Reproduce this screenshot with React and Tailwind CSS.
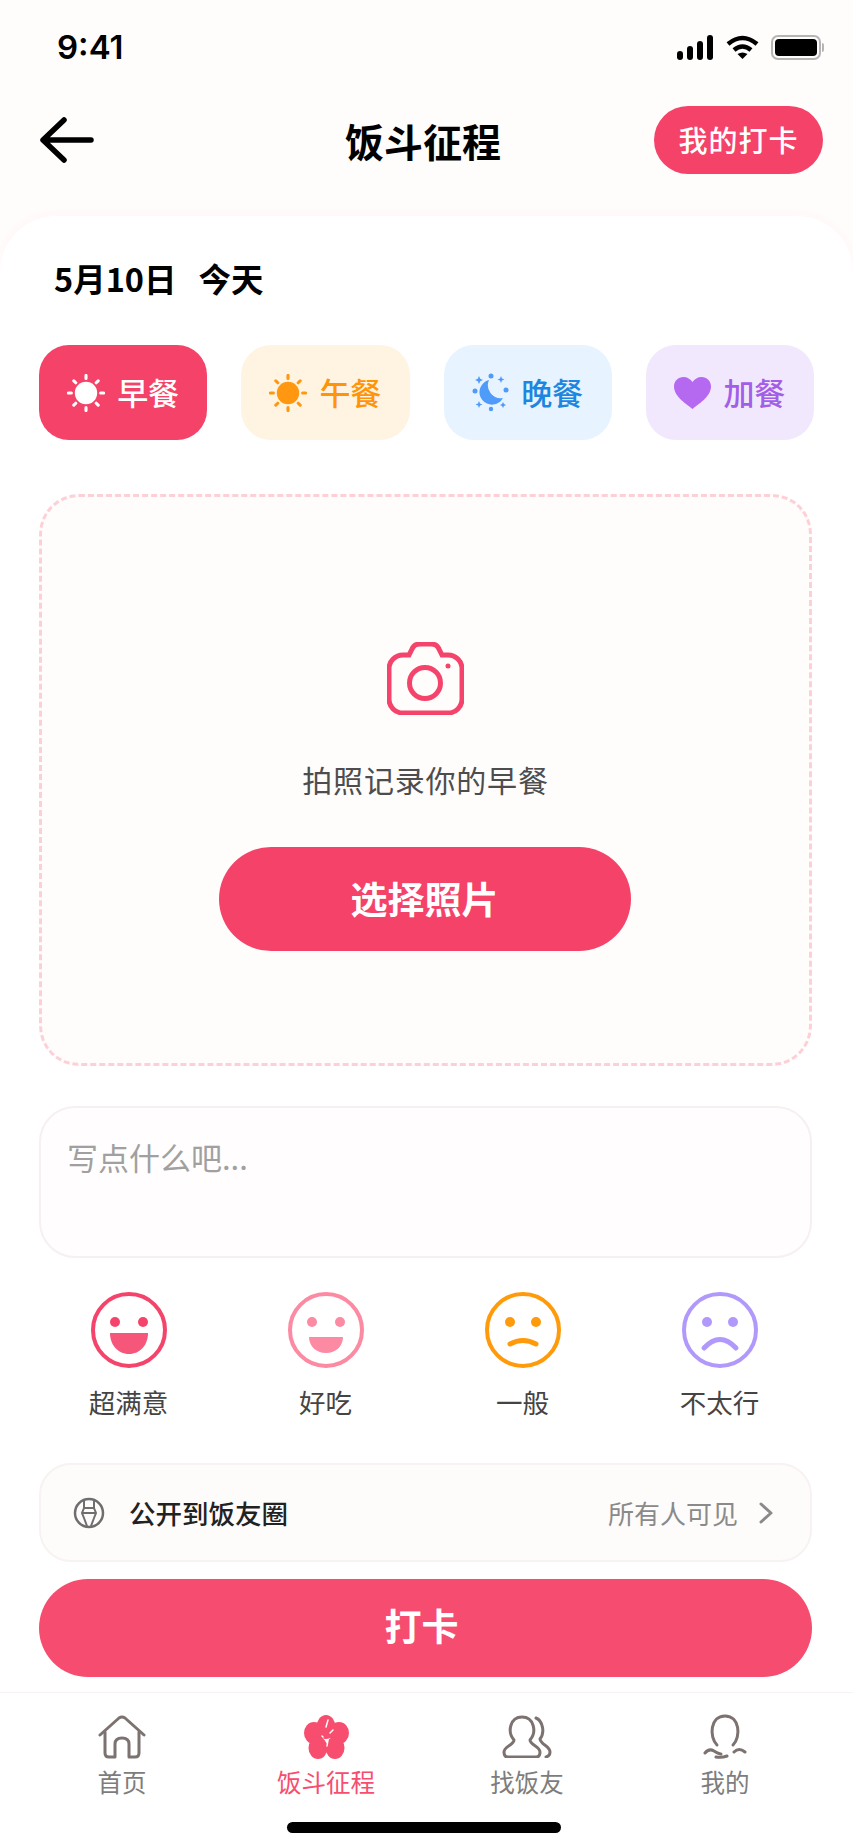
import React from 'react';

const SunIcon = ({ color, ray }) => (
  <svg width="38" height="38" viewBox="0 0 39 39">
    <circle cx="19.5" cy="19.5" r="11.500" fill={color} />
    <g stroke={ray} strokeWidth="3.200" strokeLinecap="round">
      <path d="M19.5 1.5v3M19.5 34.5v3M1.5 19.5h3M34.5 19.5h3M7 7l2 2M30 30l2 2M7 32l2-2M30 9l2-2" />
    </g>
  </svg>
);

const MoonIcon = () => (
  <svg width="37" height="39" viewBox="0 0 37 39" fill="#4f9bfa">
    <path d="M17 7a12.500 12.500 0 1 0 14 18A13 13 0 0 1 17 7z" />
    <circle cx="19" cy="3" r="2.500" />
    <circle cx="19" cy="36" r="2.200" />
    <circle cx="3" cy="18" r="2.500" />
    <circle cx="34" cy="17" r="2.500" />
    <path d="M7 3l1.200 2.800L11 7 8.200 8.200 7 11 5.800 8.200 3 7l2.800-1.200zM29 3l1 2.500 2.500 1-2.500 1-1 2.500-1-2.500-2.500-1 2.500-1zM7 28l1 2.500 2.500 1-2.500 1-1 2.500-1-2.500-2.500-1 2.500-1zM31 29l1 2 2 1-2 1-1 2-1-2-2-1 2-1z" />
  </svg>
);

const HeartIcon = () => (
  <svg width="37" height="32" viewBox="0 0 37 32">
    <path d="M18.500 32C14 28 0 20 0 9.500 0 4 4.300 0 9.500 0c3.700 0 7 2 9 5 2-3 5.300-5 9-5C32.700 0 37 4 37 9.500 37 20 23 28 18.500 32z" fill="#b568f0" />
  </svg>
);

const meals = [
  { label: '早餐', box: 'bg-[#f44268] text-white', icon: <SunIcon color="#ffffff" ray="#ffffff" /> },
  { label: '午餐', box: 'bg-[#fff4e2] text-[#ff9408]', icon: <SunIcon color="#ff9810" ray="#ff9810" /> },
  { label: '晚餐', box: 'bg-[#e7f3ff] text-[#1d86e0]', icon: <MoonIcon /> },
  { label: '加餐', box: 'bg-[#f1e8fd] text-[#a35ee8]', icon: <HeartIcon /> },
];

const moods = [
  {
    label: '超满意', color: '#f5446b',
    mouth: <path d="M19 41h38c0 12-8 21-19 21s-19-9-19-21z" fill="#f5567a" />,
    eyes: 14,
  },
  {
    label: '好吃', color: '#fb8aa2',
    mouth: <path d="M21 45h34c0 9-7 16-17 16s-17-7-17-16z" fill="#fb8aa2" />,
    eyes: 14,
  },
  {
    label: '一般', color: '#ff9a0a',
    mouth: <path d="M25 52q13-7 26 0" fill="none" stroke="#ff9a0a" strokeWidth="5" strokeLinecap="round" />,
    eyes: 13,
  },
  {
    label: '不太行', color: '#b199fb',
    mouth: <path d="M22 56q16-17 32 0" fill="none" stroke="#b199fb" strokeWidth="5" strokeLinecap="round" />,
    eyes: 13,
  },
];

const Face = ({ color, mouth, eyes }) => (
  <svg width="76" height="76" viewBox="0 0 76 76">
    <circle cx="38" cy="38" r="36" fill="none" stroke={color} strokeWidth="4" />
    <circle cx={38 - eyes} cy="30" r="5" fill={color} />
    <circle cx={38 + eyes} cy="30" r="5" fill={color} />
    {mouth}
  </svg>
);

const navStroke = { fill: 'none', stroke: '#7c7270', strokeWidth: 3, strokeLinecap: 'round', strokeLinejoin: 'round' };

const navItems = [
  {
    label: '首页',
    icon: (
      <svg width="48" height="44" viewBox="0 0 48 44" {...navStroke}>
        <path d="M2 20L21 3q3-2 6 0l19 17" />
        <path d="M7 17v21q0 4 4 4h6V29q0-6 7-6t7 6v13h6q4 0 4-4V17" />
      </svg>
    ),
  },
  {
    label: '饭斗征程',
    active: true,
    icon: (
      <svg width="45" height="44" viewBox="0 0 45 44">
        <g fill="#f74d6e">
          <ellipse cx="22" cy="12" rx="9.500" ry="12" />
          <ellipse cx="10" cy="18" rx="10" ry="11" />
          <ellipse cx="35" cy="18" rx="10" ry="11" />
          <ellipse cx="14" cy="33" rx="9.500" ry="11" />
          <ellipse cx="31" cy="33" rx="9.500" ry="11" />
        </g>
        <path d="M24 5l-2 7M29 15l-3 3M18 21l1 1M24 25l-1 6" stroke="#ffffff" strokeWidth="1.500" strokeLinecap="round" fill="none" />
      </svg>
    ),
  },
  {
    label: '找饭友',
    icon: (
      <svg width="50" height="43" viewBox="0 0 50 43" {...navStroke}>
        <path d="M12 25C5 17 8 2 20 2s15 15 8 23c0 5 10 6 10 12q0 5-4 5H6q-4 0-4-5c0-6 10-7 10-12z" />
        <path d="M34 3c7 3 9 15 4 21 1 6 10 7 10 13q0 4-4 5" />
      </svg>
    ),
  },
  {
    label: '我的',
    icon: (
      <svg width="44" height="45" viewBox="0 0 44 45" {...navStroke}>
        <path d="M14 31C6 23 7 2 22 2s16 21 8 29" />
        <path d="M2 39q4-5 9-2t7 3" />
        <path d="M31 38q5-5 11 0" />
        <path d="M13 43q6 1 11-1" />
      </svg>
    ),
  },
];

export default function App() {
  return (
    <div className="w-full h-[1844px] overflow-hidden flex flex-col bg-[#fffcfc] text-black font-['Noto_Sans_CJK_SC','Noto_Sans',sans-serif]">
      {/* Status bar */}
      <div className="h-[94px] shrink-0 flex items-center justify-between pl-[57px] pr-[29px]">
        <span className="font-['Inter',sans-serif] text-[33px] font-semibold leading-none">9:41</span>
        <div className="flex items-center gap-[12px]">
          <svg width="37" height="25" viewBox="0 0 37 25" fill="#000">
            <rect x="0" y="16" width="6" height="9" rx="3" />
            <rect x="10" y="11" width="6" height="14" rx="3" />
            <rect x="20" y="6" width="6" height="19" rx="3" />
            <rect x="30" y="0" width="6" height="25" rx="3" />
          </svg>
          <svg width="33" height="25" viewBox="0 0 33 25" fill="none" stroke="#000" strokeWidth="4.500">
            <path d="M2 9q14.500-12 29 0" />
            <path d="M8 15q8.500-7 17 0" />
            <path d="M16.500 24l-5-5q5-3 10 0z" fill="#000" stroke="none" />
          </svg>
          <div className="flex items-center gap-[1px]">
            <div className="w-[50px] h-[25px] rounded-[7px] border-2 border-[#b5b5b5] p-[2px]">
              <div className="w-full h-full rounded-[4px] bg-black" />
            </div>
            <div className="w-[2px] h-[9px] rounded-r-full bg-[#b5b5b5]" />
          </div>
        </div>
      </div>

      {/* Header */}
      <div className="mt-[12px] h-[68px] shrink-0 grid grid-cols-[305px_1fr_auto] items-center pl-[40px] pr-[30px]">
        <svg width="54" height="46" viewBox="0 0 54 46" fill="none" stroke="#000" strokeWidth="5.500" strokeLinecap="round" strokeLinejoin="round">
          <path d="M51 23H4M24 3L3 23l21 20" />
        </svg>
        <h1 className="text-[39px] font-bold leading-none">饭斗征程</h1>
        <div className="w-[169px] h-[68px] rounded-full bg-[#f44268] text-white text-[29px] font-medium tracking-[1px] flex items-center justify-center">
          我的打卡
        </div>
      </div>

      {/* Main card */}
      <div className="mt-[42px] flex-1 min-h-0 rounded-t-[56px] bg-white shadow-[0_-2px_10px_rgba(245,68,107,0.03)] pl-[39px] pr-[41px] pt-[42px]">
        <div className="h-[40px] pl-[15px] flex items-center gap-[22px] text-[32.500px] font-bold leading-none">
          <span>5月10日</span>
          <span>今天</span>
        </div>

        <div className="mt-[47px] grid grid-cols-4 gap-[34px] w-[775px]">
          {meals.map((m) => (
            <div key={m.label} className={`h-[95px] rounded-[30px] flex items-center justify-center gap-[12px] text-[31px] font-medium ${m.box}`}>
              {m.icon}
              <span>{m.label}</span>
            </div>
          ))}
        </div>

        {/* Photo upload */}
        <div className="mt-[54px] h-[572px] rounded-[40px] border-[3px] border-dashed border-[#fdd0d8] bg-[#fffcfc] flex flex-col items-center pt-[145px]">
          <svg width="77" height="73" viewBox="0 0 77 73" fill="none" stroke="#f5446b" strokeWidth="5">
            <path d="M16 13h6l3-6q2-5 8-5h11q6 0 8 5l3 6h6a14 14 0 0 1 14 14v30a14 14 0 0 1-14 14H16A14 14 0 0 1 2 57V27a14 14 0 0 1 14-14z" />
            <circle cx="38" cy="41" r="15.500" />
            <circle cx="61" cy="24" r="2.500" fill="#f5446b" stroke="none" />
          </svg>
          <p className="mt-[44px] text-[30px] leading-[40px] tracking-[0.8px] text-[#4d4d4d]">拍照记录你的早餐</p>
          <div className="mt-[48px] -translate-x-[1px] w-[412px] h-[104px] rounded-full bg-[#f44268] text-white text-[37px] font-bold flex items-center justify-center">
            选择照片
          </div>
        </div>

        {/* Note */}
        <div className="mt-[40px] h-[152px] rounded-[36px] border-2 border-[#f7f0f0] bg-[#fffdfd] pl-[26px] pt-[29px]">
          <p className="text-[31px] leading-[40px] text-[#a0a0a0]">写点什么吧...</p>
        </div>

        {/* Mood */}
        <div className="mt-[34px] -ml-[9px] -mr-[6px] grid grid-cols-4">
          {moods.map((m) => (
            <div key={m.label} className="flex flex-col items-center">
              <Face color={m.color} mouth={m.mouth} eyes={m.eyes} />
              <span className="mt-[16px] text-[26.500px] leading-[36px] text-[#444444]">{m.label}</span>
            </div>
          ))}
        </div>

        {/* Visibility */}
        <div className="mt-[43px] h-[99px] rounded-[32px] border-2 border-[#f8f2f2] bg-[#fefbfb] flex items-center pl-[32px] pr-[36px]">
          <svg width="32" height="32" viewBox="0 0 32 32" fill="none" stroke="#6e6e6e" strokeWidth="2.500">
            <circle cx="16" cy="16" r="14" />
            <path d="M11 3v8l-2 5 2 5 3 8M21 3v8l2 5-2 5-3 8M9 16h14M11 11h10" strokeWidth="2" />
          </svg>
          <span className="ml-[24px] text-[26.500px] font-medium text-[#222222]">公开到饭友圈</span>
          <span className="ml-auto text-[26px] text-[#8a8a8a]">所有人可见</span>
          <svg className="ml-[20px]" width="16" height="24" viewBox="0 0 16 24" fill="none" stroke="#8a8a8a" strokeWidth="3" strokeLinecap="round" strokeLinejoin="round">
            <path d="M3 3l10 9-10 9" />
          </svg>
        </div>

        <div className="mt-[17px] h-[98px] rounded-full bg-[#f64c6f] text-white text-[37px] font-bold flex items-center justify-center pr-[8px] pb-[4px]">
          打卡
        </div>
      </div>

      {/* Tab bar */}
      <div className="relative h-[152px] shrink-0 bg-white border-t border-[#f8f3f3] pl-[20px] pt-[21px] grid grid-cols-[204px_204px_198px_198px] content-start">
        {navItems.map((n) => (
          <div key={n.label} className="flex flex-col items-center">
            <div className="h-[45px] flex items-center">{n.icon}</div>
            <span className={`mt-[7px] text-[24.500px] leading-[32px] ${n.active ? 'text-[#f74d6e]' : 'text-[#7d7d7d]'}`}>{n.label}</span>
          </div>
        ))}
        <div className="absolute left-[287px] top-[129px] w-[274px] h-[11px] rounded-full bg-black" />
      </div>
    </div>
  );
}
